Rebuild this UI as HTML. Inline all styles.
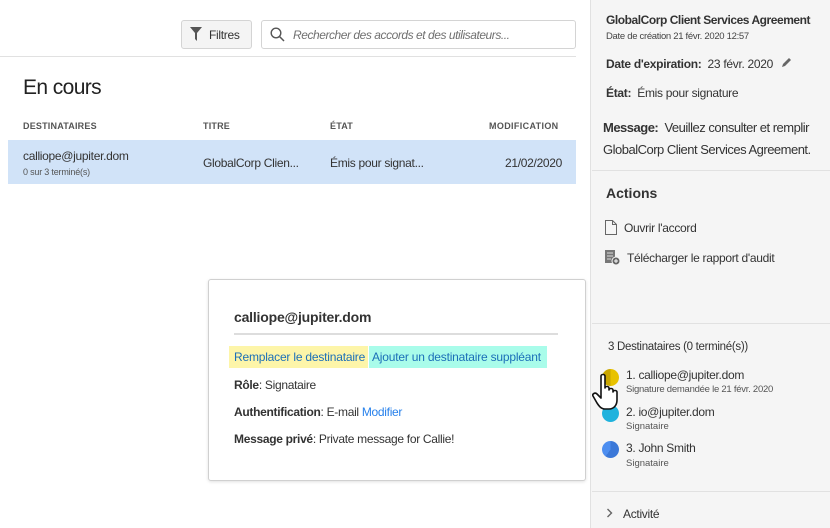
<!DOCTYPE html>
<html><head><meta charset="utf-8"><style>
*{box-sizing:border-box;margin:0;padding:0}
body{width:830px;height:528px;overflow:hidden;background:#fff;font-family:"Liberation Sans",sans-serif;color:#2c2c2c;position:relative}
.a{position:absolute;white-space:nowrap}
.side{position:absolute;left:590px;top:0;width:240px;height:528px;background:#f5f5f5;border-left:1px solid #e1e1e1}
.hr{position:absolute;height:1px;background:#e1e1e1}
</style></head><body>
<div class="a" style="left:181px;top:20px;width:71px;height:29px;border:1px solid #d4d4d4;border-radius:3px;background:#f4f4f4"></div>
<svg class="a" style="left:190px;top:27px" width="12" height="14" viewBox="0 0 12 14"><path d="M0 0h12L7 6v8L5 12V6z" fill="#555"/></svg>
<div class="a" style="left:209px;top:28px;font-size:12px;color:#333;letter-spacing:-.3px">Filtres</div>
<div class="a" style="left:261px;top:20px;width:315px;height:29px;border:1px solid #d4d4d4;border-radius:3px;background:#fff"></div>
<svg class="a" style="left:270px;top:27px" width="15" height="15" viewBox="0 0 15 15"><circle cx="6" cy="6" r="4.8" fill="none" stroke="#555" stroke-width="1.4"/><path d="M9.5 9.5L14 14" stroke="#555" stroke-width="1.5"/></svg>
<div class="a" style="left:293px;top:28px;font-size:12px;font-style:italic;color:#707070;letter-spacing:-.45px">Rechercher des accords et des utilisateurs...</div>
<div class="hr" style="left:0;top:56px;width:576px"></div>
<div class="a" style="left:23px;top:76px;font-size:21px;color:#222;letter-spacing:-.6px">En cours</div>
<div class="a" style="left:23px;top:121px;font-size:9px;font-weight:bold;color:#555;letter-spacing:.2px">DESTINATAIRES</div>
<div class="a" style="left:203px;top:121px;font-size:9px;font-weight:bold;color:#555;letter-spacing:.2px">TITRE</div>
<div class="a" style="left:330px;top:121px;font-size:9px;font-weight:bold;color:#555;letter-spacing:.2px">ÉTAT</div>
<div class="a" style="left:489px;top:121px;font-size:9px;font-weight:bold;color:#555;letter-spacing:.35px">MODIFICATION</div>
<div class="a" style="left:8px;top:140px;width:568px;height:44px;background:#d1e3f8"></div>
<div class="a" style="left:23px;top:149px;font-size:12px;color:#333;letter-spacing:-.3px">calliope@jupiter.dom</div>
<div class="a" style="left:23px;top:167px;font-size:9px;color:#555;letter-spacing:-.2px">0 sur 3 terminé(s)</div>
<div class="a" style="left:203px;top:156px;font-size:12px;color:#333;letter-spacing:-.3px">GlobalCorp Clien...</div>
<div class="a" style="left:330px;top:156px;font-size:12px;color:#333;letter-spacing:-.3px">Émis pour signat...</div>
<div class="a" style="left:505px;top:156px;font-size:12px;color:#333;letter-spacing:-.3px">21/02/2020</div>
<div class="a" style="left:208px;top:279px;width:378px;height:202px;border:1px solid #d0d0d0;border-radius:3px;background:#fff;box-shadow:0 1px 3px rgba(0,0,0,.12)"></div>
<div class="a" style="left:234px;top:309px;font-size:14px;font-weight:bold;color:#333;letter-spacing:-.2px">calliope@jupiter.dom</div>
<div class="hr" style="left:234px;top:333px;width:324px;height:2px;background:#ddd"></div>
<div class="a" style="left:229px;top:346px;width:139px;height:22px;background:#fdf5a9"></div>
<div class="a" style="left:369px;top:346px;width:178px;height:22px;background:#a9fcea"></div>
<div class="a" style="left:234px;top:350px;font-size:12px;color:#1b6fb8;letter-spacing:-.2px">Remplacer le destinataire</div>
<div class="a" style="left:372px;top:350px;font-size:12px;color:#1b6fb8;letter-spacing:-.2px">Ajouter un destinataire suppléant</div>
<div class="a" style="left:234px;top:378px;font-size:12px;color:#333;letter-spacing:-.3px"><b>Rôle</b>: Signataire</div>
<div class="a" style="left:234px;top:405px;font-size:12px;color:#333;letter-spacing:-.3px"><b>Authentification</b>: E-mail <span style="color:#2680eb">Modifier</span></div>
<div class="a" style="left:234px;top:432px;font-size:12px;color:#333;letter-spacing:-.3px"><b>Message privé</b>: Private message for Callie!</div>
<div class="side"></div>
<div class="a" style="left:606px;top:13px;font-size:12px;font-weight:bold;color:#333;letter-spacing:-.45px">GlobalCorp Client Services Agreement</div>
<div class="a" style="left:606px;top:31px;font-size:9.5px;color:#444;letter-spacing:-.3px">Date de création 21 févr. 2020 12:57</div>
<div class="a" style="left:606px;top:57px;font-size:12px;color:#333;letter-spacing:-.3px"><b>Date d'expiration:</b>&nbsp; 23 févr. 2020</div>
<svg class="a" style="left:781px;top:56px" width="12" height="12" viewBox="0 0 12 12"><path d="M1 11l1-3 6-6 2 2-6 6z" fill="#666"/></svg>
<div class="a" style="left:606px;top:86px;font-size:12px;color:#333;letter-spacing:-.3px"><b>État:</b>&nbsp; Émis pour signature</div>
<div class="a" style="left:603px;top:117px;font-size:13px;color:#333;line-height:22px;letter-spacing:-.5px"><b>Message:</b>&nbsp; Veuillez consulter et remplir<br>GlobalCorp Client Services Agreement.</div>
<div class="hr" style="left:592px;top:170px;width:238px"></div>
<div class="a" style="left:606px;top:185px;font-size:14px;font-weight:bold;color:#333">Actions</div>
<svg class="a" style="left:605px;top:220px" width="12" height="15" viewBox="0 0 12 15"><path d="M.5.5h7l4 4v10H.5z M7.5.5v4h4" fill="none" stroke="#666"/></svg>
<div class="a" style="left:624px;top:221px;font-size:12px;color:#333;letter-spacing:-.3px">Ouvrir l'accord</div>
<svg class="a" style="left:604px;top:249px" width="17" height="17" viewBox="0 0 17 17"><rect x="1" y="1" width="10" height="13" fill="#777"/><path d="M3 4h6M3 7h6M3 10h4" stroke="#ddd"/><circle cx="12" cy="12" r="4" fill="#666" stroke="#f5f5f5"/><path d="M12 10v4M10 12h4" stroke="#fff"/></svg>
<div class="a" style="left:627px;top:251px;font-size:12px;color:#333;letter-spacing:-.3px">Télécharger le rapport d'audit</div>
<div class="hr" style="left:592px;top:323px;width:238px"></div>
<div class="a" style="left:608px;top:341px;font-size:11.5px;color:#333;letter-spacing:-.3px">3 Destinataires (0 terminé(s))</div>
<div class="a" style="left:602px;top:369px;width:17px;height:17px;border-radius:50%;background:conic-gradient(#e8c200 0 50%,#c9a600 50% 100%)"></div>
<div class="a" style="left:626px;top:368px;font-size:12px;color:#333;letter-spacing:-.3px">1. calliope@jupiter.dom</div>
<div class="a" style="left:626px;top:384px;font-size:9.5px;color:#555;letter-spacing:-.25px">Signature demandée le 21 févr. 2020</div>
<div class="a" style="left:602px;top:405px;width:17px;height:17px;border-radius:50%;background:#1fb2dd"></div>
<div class="a" style="left:626px;top:405px;font-size:12px;color:#333;letter-spacing:-.3px">2. io@jupiter.dom</div>
<div class="a" style="left:626px;top:421px;font-size:9.5px;color:#555">Signataire</div>
<div class="a" style="left:602px;top:441px;width:17px;height:17px;border-radius:50%;background:conic-gradient(#3b78d8 0 60%,#4d8ef0 60% 100%)"></div>
<div class="a" style="left:626px;top:441px;font-size:12px;color:#333;letter-spacing:-.3px">3. John Smith</div>
<div class="a" style="left:626px;top:458px;font-size:9.5px;color:#555">Signataire</div>
<svg class="a" style="left:592px;top:372px" width="30" height="40" viewBox="0 0 30 40"><path d="M9 4c0-2 4-2 4 0v12c0-2 4-2 4 0v2c0-2 4-2 4 0v2c0-2 4-2 4 0v8c0 5-3 9-8 9h-4c-4 0-6-3-8-6l-4-7c-1-2 2-4 4-2l4 4z" fill="#fff" stroke="#111" stroke-width="1.6" stroke-linejoin="round"/></svg>
<div class="hr" style="left:592px;top:491px;width:238px"></div>
<svg class="a" style="left:606px;top:508px" width="7" height="10" viewBox="0 0 7 10"><path d="M1.5 1l4 4-4 4" fill="none" stroke="#666" stroke-width="1.4"/></svg>
<div class="a" style="left:623px;top:507px;font-size:12px;color:#333;letter-spacing:-.3px">Activité</div>
</body></html>
